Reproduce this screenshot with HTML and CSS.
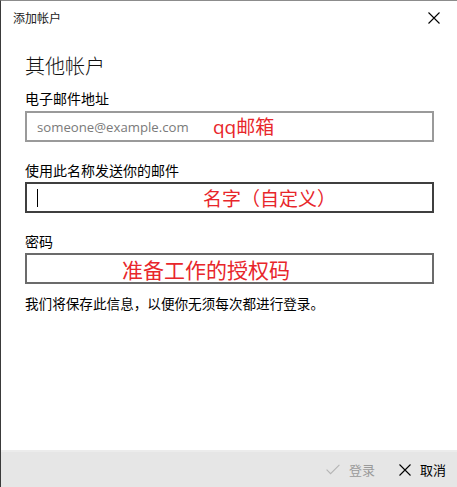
FILE: index.html
```html
<!DOCTYPE html>
<html lang="zh-CN">
<head>
<meta charset="utf-8">
<title>添加帐户</title>
<link rel="stylesheet" href="styles.css">
</head>
<body>
<div class="window">
  <div class="titlebar">
    <span class="title">添加帐户</span>
    <span class="close" aria-label="关闭">
      <svg width="12" height="12" viewBox="0 0 12 12"><path d="M0.5 0.5 L11.5 11.5 M11.5 0.5 L0.5 11.5" stroke="#000" stroke-width="1.1" fill="none"/></svg>
    </span>
  </div>
  <div class="content">
    <h1 class="heading">其他帐户</h1>
    <div class="label label-first">电子邮件地址</div>
    <div class="field field-light">
      <span class="placeholder">someone@example.com</span>
      <span class="note note-email">qq邮箱</span>
    </div>
    <div class="label">使用此名称发送你的邮件</div>
    <div class="field field-dark">
      <span class="caret"></span>
      <span class="note note-name">名字（自定义）</span>
    </div>
    <div class="label">密码</div>
    <div class="field field-mid">
      <span class="note note-pass">准备工作的授权码</span>
    </div>
    <p class="info">我们将保存此信息，以便你无须每次都进行登录。</p>
  </div>
  <div class="footer">
    <span class="btn btn-disabled">
      <svg width="14" height="11" viewBox="0 0 14 11"><path d="M0.6 5.6 L4.6 9.6 L13.4 0.8" stroke="#b5b5b5" stroke-width="1.1" fill="none"/></svg>
      <span>登录</span>
    </span>
    <span class="btn">
      <svg width="12" height="12" viewBox="0 0 12 12"><path d="M0.5 0.5 L11.5 11.5 M11.5 0.5 L0.5 11.5" stroke="#000" stroke-width="1.1" fill="none"/></svg>
      <span>取消</span>
    </span>
  </div>
</div>
</body>
</html>
```

FILE: styles.css
```css
html, body {
  margin: 0;
  padding: 0;
  background: #ffffff;
}
body {
  font-family: "Noto Sans CJK SC", "Noto Sans", sans-serif;
  color: #000;
}
.window {
  box-sizing: border-box;
  width: 457px;
  height: 487px;
  border-top: 1px solid #8c8c8c;
  border-left: 1px solid #3a3a3a;
  display: flex;
  flex-direction: column;
  background: #fff;
}
.titlebar {
  height: 33px;
  display: flex;
  align-items: center;
  justify-content: space-between;
  padding: 0 17px 0 12px;
}
.title {
  font-size: 12px;
  line-height: 16px;
  color: #222;
}
.close {
  display: flex;
  width: 12px;
  height: 12px;
}
.content {
  flex: 1;
  padding: 0 23px 0 24px;
}
.heading {
  margin: 20px 0 0 0;
  font-size: 20px;
  line-height: 24px;
  font-weight: 300;
  color: #111;
}
.label {
  margin-top: 18px;
  font-size: 14px;
  line-height: 20px;
}
.label-first {
  margin-top: 10px;
}
.field {
  box-sizing: border-box;
  height: 31px;
  margin-top: 2px;
  border: 2px solid #999;
  display: flex;
  align-items: center;
  padding-left: 10px;
}
.label-first + .field {
  margin-top: 3px;
}
.field-light { border-color: #9a9a9a; }
.field-dark { border-color: #3f3f3f; }
.field-mid { border-color: #6b6b6b; }
.placeholder {
  width: 176px;
  flex: none;
  font-family: "Open Sans", "Noto Sans", sans-serif;
  font-size: 13.2px;
  color: #7a7a7a;
  white-space: nowrap;
}
.caret {
  width: 1px;
  height: 18px;
  background: #000;
  flex: none;
}
.note {
  color: #e8262b;
  font-size: 19px;
  line-height: 24px;
  white-space: nowrap;
}
.note-email {
  font-family: "Open Sans", "Noto Sans CJK SC", sans-serif;
}
.note-name {
  margin-left: 165px;
}
.note-pass {
  margin-left: 85px;
  font-size: 21px;
}
.info {
  margin: 9px 0 0 0;
  font-size: 13.6px;
  line-height: 20px;
}
.footer {
  height: 37px;
  box-sizing: border-box;
  background: #e6e6e6;
  border-top: 2px solid #ececec;
  display: flex;
  align-items: center;
  justify-content: flex-end;
  padding: 0 11px 0 0;
  gap: 24px;
}
.btn {
  display: flex;
  align-items: center;
  gap: 9px;
  font-size: 13px;
  line-height: 18px;
  color: #000;
}
.btn-disabled {
  color: #9a9a9a;
}
```
